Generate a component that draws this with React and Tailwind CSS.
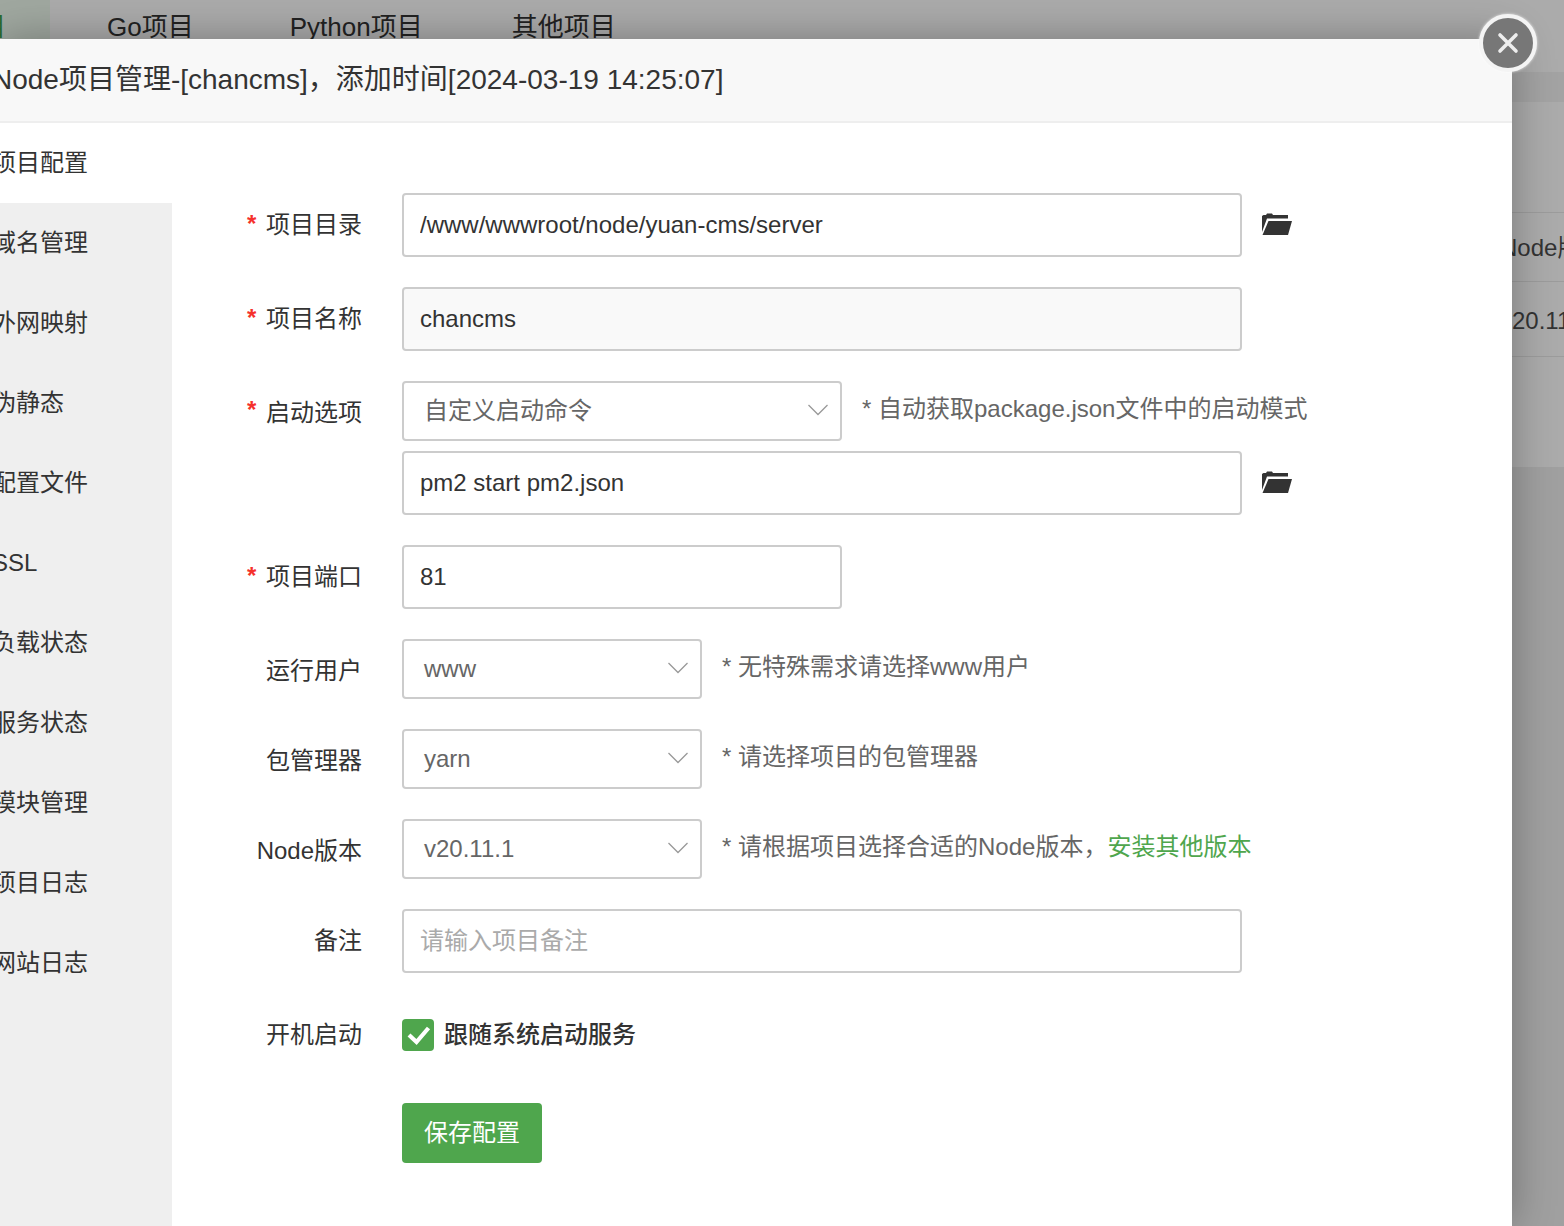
const FONT = "font-['Liberation_Sans','Noto_Sans_CJK_SC',sans-serif]";

const sideItems = ["项目配置", "域名管理", "外网映射", "伪静态", "配置文件", "SSL", "负载状态", "服务状态", "模块管理", "项目日志", "网站日志"];

function FolderIcon() {
  return (
    <svg width="30" height="22" viewBox="0 0 30 22" className="ml-5 shrink-0 -mt-[3px]">
      <path d="M0 21V3L1.5 2H4L5 0.5H10L11 2H26V5.5H5L0 19z" fill="#333" />
      <path d="M6.5 8H30L26 22H0.5z" fill="#333" />
    </svg>
  );
}

function Chevron() {
  return (
    <svg width="20" height="12" viewBox="0 0 20 12" className="shrink-0 mb-[2px]">
      <path d="M0.5 1 10 10.5 19.5 1" fill="none" stroke="#999" strokeWidth="1.3" />
    </svg>
  );
}

function Label({ req, low, children }) {
  return (
    <div className={`relative w-[190px] mr-10 shrink-0 text-right text-[#333] ${low ? "pt-1" : ""}`}>
      {req && <span className={`absolute left-[75px] font-bold text-[#f5312c] ${low ? "top-[1px]" : "top-[-1px]"}`}>*</span>}
      {children}
    </div>
  );
}

function TextInput({ value, placeholder, wide = true, gray }) {
  return (
    <input
      readOnly
      value={value}
      placeholder={placeholder}
      className={`h-16 ${wide ? "w-[840px]" : "w-[440px]"} px-4 border-2 border-[#ccc] rounded text-[#333] placeholder:text-[#aaa] outline-none ${gray ? "bg-[#f9f9f9]" : "bg-white"}`}
    />
  );
}

function SelectBox({ value, w }) {
  return (
    <div className={`flex items-center justify-between h-[60px] ${w} pl-5 pr-3 border-2 border-[#ccc] rounded text-[#666] shrink-0`}>
      <span>{value}</span>
      <Chevron />
    </div>
  );
}

function Hint({ children }) {
  return <div className="ml-5 text-[#666] -mt-1">{children}</div>;
}

export default function App() {
  return (
    <div className={`${FONT} relative w-[1564px] h-[1226px] overflow-hidden bg-[#a9a9a9] text-2xl`}>
      {/* page behind the overlay */}
      <div className="flex h-[39px] overflow-hidden bg-[#ababab] text-[#222] text-[26px] leading-[54px]">
        <div className="w-[50px] h-full overflow-hidden bg-[#a0a8a0] text-[#2d6b2d]">
          <span className="block -ml-[20px]">目</span>
        </div>
        <div className="ml-[57px]">Go项目</div>
        <div className="ml-[96px]">Python项目</div>
        <div className="ml-[89px]">其他项目</div>
      </div>

      <div className="flex h-[1187px]">
        {/* modal */}
        <div className="relative z-10 w-[1512px] shrink-0 bg-white flex flex-col shadow-[0_0_40px_rgba(0,0,0,0.3)]">
          <div className="h-[84px] shrink-0 bg-[#f8f8f8] border-b-2 border-[#eee] text-[28px] leading-[82px] text-[#333] whitespace-nowrap -indent-[8px]">
            Node项目管理-[chancms]，添加时间[2024-03-19 14:25:07]
          </div>
          <div className="flex flex-1">
            <div className="w-[172px] shrink-0 bg-[#efefef]">
              {sideItems.map((t, i) => (
                <div
                  key={t}
                  className={`h-20 leading-[80px] whitespace-nowrap text-[#333] -ml-2 ${i === 0 ? "bg-white" : ""}`}
                >
                  {t}
                </div>
              ))}
            </div>

            <div className="pt-[70px] flex flex-col">
              <div className="flex items-center mb-[30px]">
                <Label req>项目目录</Label>
                <TextInput value="/www/wwwroot/node/yuan-cms/server" />
                <FolderIcon />
              </div>
              <div className="flex items-center mb-[30px]">
                <Label req>项目名称</Label>
                <TextInput value="chancms" gray />
              </div>
              <div className="flex items-center mb-[10px]">
                <Label req low>启动选项</Label>
                <SelectBox value="自定义启动命令" w="w-[440px]" />
                <Hint>* 自动获取package.json文件中的启动模式</Hint>
              </div>
              <div className="flex items-center mb-[30px]">
                <div className="w-[190px] mr-10 shrink-0" />
                <TextInput value="pm2 start pm2.json" />
                <FolderIcon />
              </div>
              <div className="flex items-center mb-[30px]">
                <Label req>项目端口</Label>
                <TextInput value="81" wide={false} />
              </div>
              <div className="flex items-center mb-[30px]">
                <Label low>运行用户</Label>
                <SelectBox value="www" w="w-[300px]" />
                <Hint>* 无特殊需求请选择www用户</Hint>
              </div>
              <div className="flex items-center mb-[30px]">
                <Label low>包管理器</Label>
                <SelectBox value="yarn" w="w-[300px]" />
                <Hint>* 请选择项目的包管理器</Hint>
              </div>
              <div className="flex items-center mb-[30px]">
                <Label low>Node版本</Label>
                <SelectBox value="v20.11.1" w="w-[300px]" />
                <Hint>
                  * 请根据项目选择合适的Node版本，<span className="text-[#4fa64d]">安装其他版本</span>
                </Hint>
              </div>
              <div className="flex items-center mb-[30px]">
                <Label>备注</Label>
                <TextInput placeholder="请输入项目备注" />
              </div>
              <div className="flex items-center h-16 mb-9">
                <Label>开机启动</Label>
                <div className="w-8 h-8 rounded bg-[#4fa64d]">
                  <svg width="32" height="32" viewBox="0 0 32 32">
                    <path d="M7 16 14.5 23 26.5 9" fill="none" stroke="#fff" strokeWidth="4.2" />
                  </svg>
                </div>
                <span className="ml-[10px] font-medium text-[#333]">跟随系统启动服务</span>
              </div>
              <div className="flex">
                <div className="w-[190px] mr-10 shrink-0" />
                <button className="w-[140px] h-[60px] rounded bg-[#4fa64d] text-white">保存配置</button>
              </div>
            </div>
          </div>
        </div>

        {/* table behind, right of the modal */}
        <div className="flex-1 overflow-hidden text-[#333]">
          <div className="h-[33px] bg-[#ababab]" />
          <div className="h-[30px] bg-[#a3a3a3]" />
          <div className="h-[111px] bg-[#ababab] border-b border-[#9c9c9c]" />
          <div className="h-[69px] leading-[70px] whitespace-nowrap border-b border-[#9c9c9c] bg-[#ababab] -indent-[12px]">Node版本</div>
          <div className="h-[75px] leading-[78px] whitespace-nowrap border-b border-[#9c9c9c] bg-[#ababab] -indent-[12px]">v20.11.1</div>
          <div className="h-[110px] bg-[#ababab]" />
          <div className="h-[760px] bg-[#a0a0a0]" />
        </div>
      </div>

      {/* close button */}
      <div className="absolute z-20 left-[1479px] top-[14px] flex items-center justify-center w-[58px] h-[58px] rounded-full bg-[#777] border-[4px] border-[#f4f4f4] shadow-[0_0_3px_rgba(255,255,255,0.8)]">
        <svg width="22" height="22" viewBox="0 0 22 22">
          <path d="M3 3 19 19M19 3 3 19" stroke="#eee" strokeWidth="3.6" strokeLinecap="round" />
        </svg>
      </div>
    </div>
  );
}
